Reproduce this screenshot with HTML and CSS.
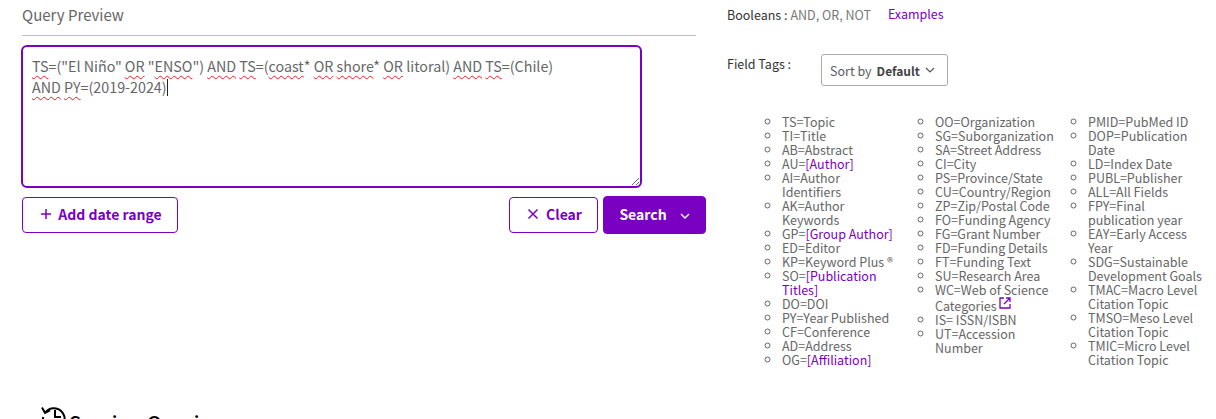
FILE: index.html
```html
<!DOCTYPE html>
<html lang="en">
<head>
    <meta charset="UTF-8">
    <title>Query Preview</title>
    <link rel="stylesheet" href="styles.css">
</head>
<body>
    <div class="page">
        <section class="query-col">
            <h2 class="query-title">Query Preview</h2>
            <div class="query-box"><span class="sp">TS</span>=("El Niño" <span class="sp">OR</span> "<span class="sp">ENSO</span>") <span class="sp">AND</span> <span class="sp">TS</span>=(<span class="sp">coast</span>* <span class="sp">OR</span> <span class="sp">shore</span>* <span class="sp">OR</span> litoral) <span class="sp">AND</span> <span class="sp">TS</span>=(Chile)<br><span class="sp">AND</span> <span class="sp">PY</span>=(2019-2024)<i class="caret"></i></div>
            <div class="actions">
                <button class="btn btn-date">
                    <svg width="12" height="12" viewBox="0 0 12 12"><path d="M6 1v10M1 6h10" stroke="currentColor" stroke-width="1.5" fill="none"/></svg>
                    <span>Add date range</span>
                </button>
                <div class="actions-right">
                    <button class="btn btn-clear">
                        <svg width="12" height="12" viewBox="0 0 12 12"><path d="M1.5 1.5l9 9M10.5 1.5l-9 9" stroke="currentColor" stroke-width="1.5" fill="none"/></svg>
                        <span>Clear</span>
                    </button>
                    <button class="btn btn-search">
                        <span>Search</span>
                        <svg class="chev" width="10" height="6" viewBox="0 0 10 6"><path d="M1 1l4 4 4-4" stroke="currentColor" stroke-width="1.4" fill="none"/></svg>
                    </button>
                </div>
            </div>
            <div class="session">
                <svg class="session-icon" width="26" height="26" viewBox="0 0 26 26"><path d="M4.2 9.5A10.8 10.8 0 1 1 2.2 14" stroke="#000" stroke-width="2" fill="none"/><path d="M1 4.5l3 5.5 5-2.6M14 7v7h6" stroke="#000" stroke-width="2" fill="none"/></svg>
                <h2 class="session-title">Session Queries</h2>
            </div>
        </section>

        <aside class="help-col">
            <div class="booleans">
                <span class="label">Booleans :</span>
                <span class="bool-values">AND, OR, NOT</span>
                <a class="link examples" href="#">Examples</a>
            </div>
            <div class="tags-head">
                <span class="label tags-label">Field Tags :</span>
                <button class="sort-btn">
                    <span>Sort by</span> <b>Default</b>
                    <svg width="10" height="6" viewBox="0 0 10 6"><path d="M1 1l4 4 4-4" stroke="#555" stroke-width="1.2" fill="none"/></svg>
                </button>
            </div>
            <div class="tags">
                <ul>
                    <li>TS=Topic</li>
                    <li>TI=Title</li>
                    <li>AB=Abstract</li>
                    <li>AU=<a class="link" href="#">[Author]</a></li>
                    <li>AI=Author<br>Identifiers</li>
                    <li>AK=Author Keywords</li>
                    <li>GP=<a class="link" href="#">[Group Author]</a></li>
                    <li>ED=Editor</li>
                    <li>KP=Keyword Plus ®</li>
                    <li>SO=<a class="link" href="#">[Publication Titles]</a></li>
                    <li>DO=DOI</li>
                    <li>PY=Year Published</li>
                    <li>CF=Conference</li>
                    <li>AD=Address</li>
                    <li>OG=<a class="link" href="#">[Affiliation]</a></li>
                </ul>
                <ul>
                    <li>OO=Organization</li>
                    <li>SG=Suborganization</li>
                    <li>SA=Street Address</li>
                    <li>CI=City</li>
                    <li>PS=Province/State</li>
                    <li>CU=Country/Region</li>
                    <li>ZP=Zip/Postal Code</li>
                    <li>FO=Funding Agency</li>
                    <li>FG=Grant Number</li>
                    <li>FD=Funding Details</li>
                    <li>FT=Funding Text</li>
                    <li>SU=Research Area</li>
                    <li>WC=Web of Science Categories
                        <svg class="ext" width="12" height="12" viewBox="0 0 12 12"><path d="M5 1H1v10h10V7M7 1h4v4M11 1L5 7" stroke="#7a00c2" stroke-width="1.3" fill="none"/></svg>
                    </li>
                    <li>IS= ISSN/ISBN</li>
                    <li>UT=Accession Number</li>
                </ul>
                <ul>
                    <li>PMID=PubMed ID</li>
                    <li>DOP=Publication Date</li>
                    <li>LD=Index Date</li>
                    <li>PUBL=Publisher</li>
                    <li>ALL=All Fields</li>
                    <li>FPY=Final publication year</li>
                    <li>EAY=Early Access Year</li>
                    <li>SDG=Sustainable Development Goals</li>
                    <li>TMAC=Macro Level Citation Topic</li>
                    <li>TMSO=Meso Level Citation Topic</li>
                    <li>TMIC=Micro Level Citation Topic</li>
                </ul>
            </div>
        </aside>
    </div>
</body>
</html>
```

FILE: styles.css
```css
html, body {
    margin: 0;
    padding: 0;
    height: 419px;
    overflow: hidden;
    background-color: #fff;
}

body {
    font-family: "Noto Sans CJK SC", "Noto Sans", sans-serif;
    color: #5c5c5c;
}

.page {
    display: flex;
    align-items: flex-start;
}

/* left side */
.query-col {
    flex: none;
    width: 684px;
    margin-left: 22px;
}

.query-title {
    width: 674px;
    height: 35px;
    margin: 0;
    border-bottom: 1px solid #bdbdbd;
    font-size: 15px;
    font-weight: 400;
    line-height: 30px;
    color: #666;
}

.query-box {
    box-sizing: border-box;
    width: 621px;
    height: 143px;
    margin: 9px 0 0 -1px;
    padding: 8px 9px;
    border: 2px solid #7a00c2;
    border-radius: 6px;
    font-size: 14.3px;
    line-height: 21px;
    color: #666;
    overflow: auto;
    resize: both;
}

.sp {
    text-decoration: underline wavy #f01c1c 1.2px;
    text-underline-offset: 3px;
}

.caret {
    display: inline-block;
    width: 1px;
    height: 17px;
    background-color: #222;
    vertical-align: -3px;
}

.actions {
    display: flex;
    justify-content: space-between;
    align-items: center;
    margin-top: 8px;
}

.actions-right {
    display: flex;
    align-items: center;
    gap: 5px;
}

.btn {
    box-sizing: border-box;
    display: flex;
    align-items: center;
    justify-content: center;
    height: 36px;
    padding: 0 0 2px;
    font-family: inherit;
    font-size: 14px;
    font-weight: 700;
    color: #7a00c2;
    background-color: #fff;
    border: 1px solid #7a00c2;
    border-radius: 4px;
}

.btn-date {
    width: 156px;
    gap: 6px;
    padding-left: 2px;
}

.btn-clear {
    width: 89px;
    gap: 7px;
    padding-left: 2px;
}

.btn-search {
    width: 103px;
    height: 38px;
    gap: 13px;
    color: #fff;
    background-color: #7a00c2;
}

.chev {
    margin-top: 3px;
}

.session {
    display: flex;
    align-items: flex-start;
    gap: 2px;
    margin: 172px 0 0 19px;
}

.session-icon {
    margin-top: -3px;
}

.session-title {
    margin: 4px 0 0;
    font-size: 20px;
    font-weight: 500;
    line-height: 26px;
    color: #000;
}

/* right side */
.help-col {
    flex: none;
    margin-left: 21px;
    font-size: 12.5px;
}

.label {
    color: #333;
}

.link {
    color: #7a00c2;
    text-decoration: none;
}

.booleans {
    display: flex;
    align-items: baseline;
    height: 29px;
    line-height: 29px;
}

.bool-values {
    margin-left: 3px;
    color: #777;
}

.examples {
    margin-left: 17px;
    align-self: flex-start;
    line-height: 28px;
}

.tags-head {
    display: flex;
    align-items: flex-start;
    margin-top: 25px;
}

.tags-label {
    width: 94px;
    line-height: 20px;
}

.sort-btn {
    box-sizing: border-box;
    display: flex;
    align-items: center;
    gap: 5px;
    width: 127px;
    height: 32px;
    padding: 0 8px;
    font-family: inherit;
    font-size: 12.5px;
    white-space: nowrap;
    color: #5c5c5c;
    background-color: #fff;
    border: 1px solid #aaa;
    border-radius: 3px;
}

.sort-btn b {
    font-size: 12px;
    color: #444;
}

.tags {
    display: flex;
    margin: 29px 0 0 55px;
}

.tags ul {
    flex: none;
    width: 120px;
    margin: 0 33px 0 0;
    padding: 0;
    list-style-type: circle;
    line-height: 14px;
    font-size: 12.5px;
    color: #666;
}

.ext {
    vertical-align: 2px;
}
```
